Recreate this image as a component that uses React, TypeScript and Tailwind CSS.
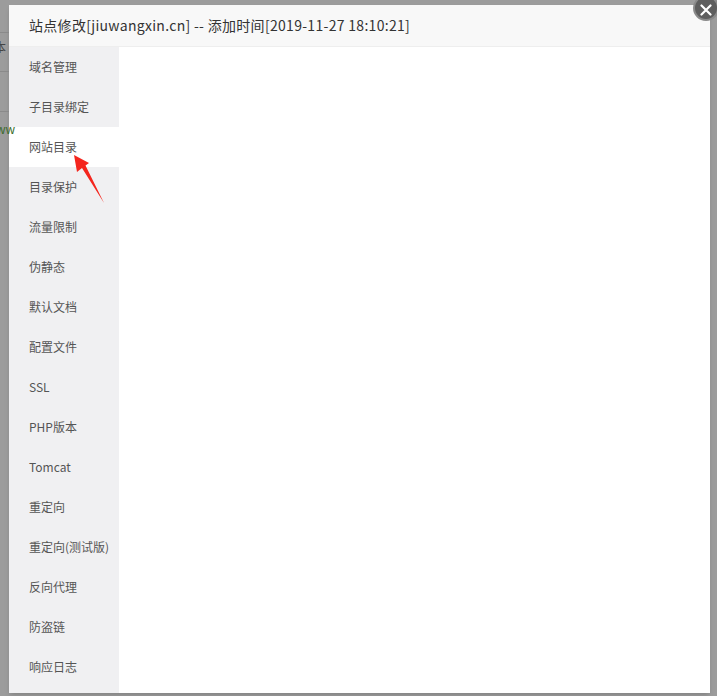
import React from "react";

const menu = [
  "域名管理",
  "子目录绑定",
  "网站目录",
  "目录保护",
  "流量限制",
  "伪静态",
  "默认文档",
  "配置文件",
  "SSL",
  "PHP版本",
  "Tomcat",
  "重定向",
  "重定向(测试版)",
  "反向代理",
  "防盗链",
  "响应日志",
];

const App = () => {
  return (
    <div
      className="relative w-[717px] h-[696px] overflow-hidden bg-[#9c9c9c] text-[#333]"
      style={{ fontFamily: '"Noto Sans CJK SC", "Noto Sans", sans-serif' }}
    >
      {/* page behind the overlay */}
      <div className="absolute left-0 top-0 w-[9px] h-full">
        <div className="h-[33px] border-b border-[#8a8a8a]" />
        <div className="h-[39px] border-b border-[#8a8a8a] text-[12px] leading-[28px] text-[#444] -ml-[6px]">本</div>
        <div className="h-[40px] border-b border-[#8a8a8a]" />
        <div className="h-[40px] text-[12px] leading-[34px] text-[#3c6b2c] -ml-[4px]">ww</div>
      </div>

      <div className="flex pl-[9px] pt-[5px]">
        <div className="w-[701px] h-[688px] bg-white flex flex-col shadow-md">
          {/* header */}
          <div className="h-[42px] shrink-0 bg-[#f8f8f8] border-b border-[#eee] pl-[20px] text-[14px] tracking-[0.3px] leading-[41px] text-[#333]">
            站点修改[jiuwangxin.cn] -- 添加时间[2019-11-27 18:10:21]
          </div>
          <div className="flex flex-1 min-h-0">
            <div className="w-[110px] bg-[#f0f0f2] flex flex-col">
              {menu.map((m) => (
                <div
                  key={m}
                  className={`h-[40px] pl-[20px] text-[12px] leading-[40px] text-[#555] whitespace-nowrap ${
                    m === "网站目录" ? "bg-white" : ""
                  }`}
                >
                  {m}
                </div>
              ))}
            </div>
            <div className="flex-1 bg-white" />
          </div>
        </div>
      </div>

      {/* close button */}
      <div className="absolute left-[693px] top-[-5px] w-[26px] h-[26px] rounded-full bg-[#5e5e5e] border-2 border-[#8a8a8a] flex items-center justify-center">
        <svg width="12" height="12" viewBox="0 0 12 12" className="mt-[3px] -ml-[1px]">
          <path d="M1.5 1.5 L10.5 10.5 M10.5 1.5 L1.5 10.5" stroke="white" strokeWidth="2.2" strokeLinecap="round" />
        </svg>
      </div>

      {/* red arrow annotation */}
      <svg className="absolute left-[70px] top-[150px]" width="40" height="56" viewBox="0 0 40 56">
        <path d="M4 5 L19 13 L15.5 15.5 L34 53 L12 18 L7 22 Z" fill="#f4261e" />
      </svg>
    </div>
  );
};

export default App;
